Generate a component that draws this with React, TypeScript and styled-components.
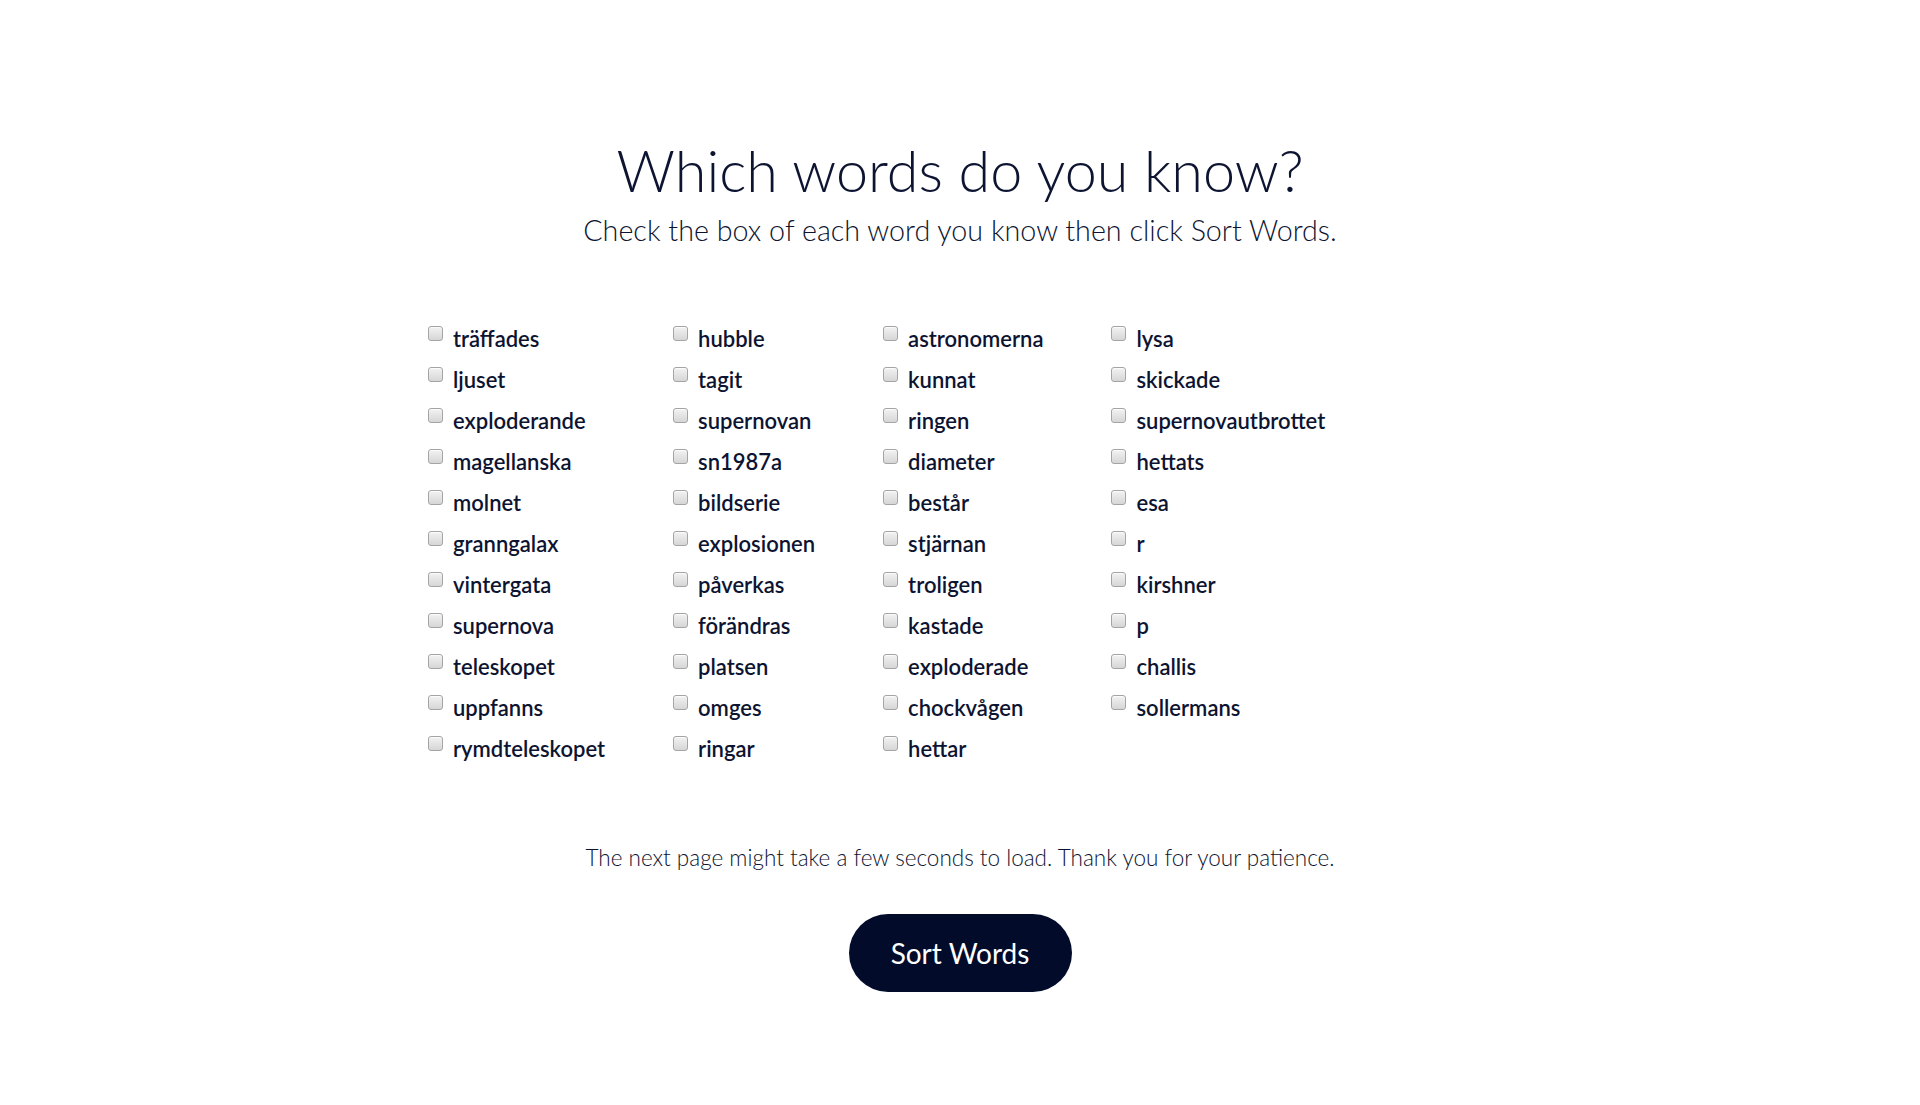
import React, { useState } from "react";
import styled, { createGlobalStyle } from "styled-components";

const words: string[] = [
  "träffades", "ljuset", "exploderande", "magellanska", "molnet", "granngalax",
  "vintergata", "supernova", "teleskopet", "uppfanns", "rymdteleskopet",
  "hubble", "tagit", "supernovan", "sn1987a", "bildserie", "explosionen",
  "påverkas", "förändras", "platsen", "omges", "ringar",
  "astronomerna", "kunnat", "ringen", "diameter", "består", "stjärnan",
  "troligen", "kastade", "exploderade", "chockvågen", "hettar",
  "lysa", "skickade", "supernovautbrottet", "hettats", "esa", "r",
  "kirshner", "p", "challis", "sollermans",
];

const GlobalStyle = createGlobalStyle`
  body {
    margin: 0;
    background: #ffffff;
    font-family: Lato, "Open Sans", sans-serif;
    color: #0d1431;
  }
`;

const Page = styled.main`
  display: flex;
  flex-direction: column;
  align-items: center;
  padding-top: 136px;
  min-height: 1105px;
  box-sizing: border-box;
`;

const Title = styled.h1`
  margin: 0;
  font-size: 57.5px;
  font-weight: 300;
  line-height: 68px;
  color: #0d1431;
`;

const Subtitle = styled.p`
  margin: 8px 0 0;
  font-size: 28.7px;
  font-weight: 300;
  line-height: 36px;
  color: #0d1431;
`;

const ListWrap = styled.div`
  width: 1064px;
  margin-top: 78px;
`;

const WordGrid = styled.div`
  display: grid;
  grid-template-rows: repeat(11, 41px);
  grid-auto-flow: column;
  grid-auto-columns: max-content;
  column-gap: 68px;
`;

const WordLabel = styled.label`
  display: flex;
  align-items: flex-start;
  gap: 10px;
  font-size: 22px;
  font-weight: 600;
  line-height: 26px;
  color: #0d1431;
  cursor: pointer;
`;

const Box = styled.input`
  appearance: none;
  margin: 0;
  width: 15px;
  height: 15px;
  border: 1px solid #a4a4a4;
  border-radius: 3px;
  background: linear-gradient(#f2f2f2, #d6d6d6);
  box-shadow: inset 0 1px 1px rgba(255, 255, 255, 0.8);
  cursor: pointer;

  &:checked {
    background: #0d1431;
    border-color: #0d1431;
  }
`;

const Note = styled.p`
  margin: 67px 0 0;
  font-size: 22.5px;
  font-weight: 300;
  line-height: 28px;
  color: #0d1431;
`;

const SortButton = styled.button`
  margin-top: 42px;
  width: 223px;
  height: 78px;
  border: none;
  border-radius: 39px;
  background: #020c2a;
  color: #ffffff;
  font-family: Lato, "Open Sans", sans-serif;
  font-size: 28px;
  font-weight: 400;
  cursor: pointer;
`;

export default function App() {
  const [known, setKnown] = useState<Record<string, boolean>>({});

  return (
    <Page>
      <GlobalStyle />
      <Title>Which words do you know?</Title>
      <Subtitle>Check the box of each word you know then click Sort Words.</Subtitle>
      <ListWrap>
        <WordGrid>
          {words.map((word) => (
            <WordLabel key={word}>
              <Box
                type="checkbox"
                checked={!!known[word]}
                onChange={() => setKnown({ ...known, [word]: !known[word] })}
              />
              {word}
            </WordLabel>
          ))}
        </WordGrid>
      </ListWrap>
      <Note>The next page might take a few seconds to load. Thank you for your patience.</Note>
      <SortButton type="button">Sort Words</SortButton>
    </Page>
  );
}
